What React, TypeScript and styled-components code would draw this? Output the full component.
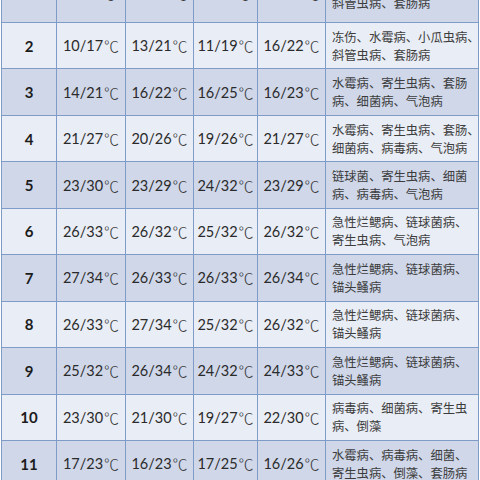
import React from "react";
import styled, { createGlobalStyle } from "styled-components";

const GlobalStyle = createGlobalStyle`
    html, body {
        margin: 0;
        padding: 0;
        background: #ffffff;
        overflow: hidden;
    }
`;

const Page = styled.div`
    width: 480px;
    height: 480px;
    overflow: hidden;
    background: #ffffff;
`;

// first row is only partly on screen, it sits above the visible area
const Table = styled.div`
    margin-top: -36px;
    margin-left: 1px;
    display: grid;
    grid-template-columns: 55px 69px 68px 64px 68px 153px;
    grid-template-rows: 58px;
    grid-auto-rows: 46.44px;
    border-top: 1px solid #7f9bc8;
    border-left: 1px solid #7f9bc8;
    width: 477px;
`;

const Cell = styled.div<{ $dark: boolean }>`
    box-sizing: border-box;
    border-right: 1px solid #7f9bc8;
    border-bottom: 1px solid #7f9bc8;
    background: ${(p) => (p.$dark ? "#cfd7e9" : "#e9edf5")};
    display: flex;
    align-items: center;
    justify-content: center;
    overflow: hidden;
`;

const NumCell = styled(Cell)`
    font-family: Lato, "Liberation Sans", sans-serif;
    font-weight: 700;
    font-size: 15px;
    color: #1c1c1c;
`;

const TempCell = styled(Cell)`
    font-family: Lato, "Noto Sans CJK SC", sans-serif;
    font-size: 14.5px;
    color: #2a2a2a;
`;

const Degree = styled.span`
    font-family: "Noto Sans CJK SC", sans-serif;
    font-weight: 300;
    font-size: 15px;
    color: #3a3a3a;
    margin-left: 1px;
`;

const DiseaseCell = styled(Cell)`
    justify-content: flex-start;
    padding-left: 6px;
    font-family: "Noto Sans CJK SC", sans-serif;
    font-weight: 400;
    font-size: 12.3px;
    line-height: 18px;
    color: #3c3c3c;
    white-space: nowrap;
`;

const Lines = styled.div`
    display: flex;
    flex-direction: column;
`;

interface IRow {
    no: string;
    temps: string[];
    lines: string[];
}

const rows: IRow[] = [
    { no: "1", temps: ["8/15", "10/17", "9/16", "12/18"], lines: ["冻伤、水霉病、小瓜虫病、", "斜管虫病、套肠病"] },
    { no: "2", temps: ["10/17", "13/21", "11/19", "16/22"], lines: ["冻伤、水霉病、小瓜虫病、", "斜管虫病、套肠病"] },
    { no: "3", temps: ["14/21", "16/22", "16/25", "16/23"], lines: ["水霉病、寄生虫病、套肠", "病、细菌病、气泡病"] },
    { no: "4", temps: ["21/27", "20/26", "19/26", "21/27"], lines: ["水霉病、寄生虫病、套肠、", "细菌病、病毒病、气泡病"] },
    { no: "5", temps: ["23/30", "23/29", "24/32", "23/29"], lines: ["链球菌、寄生虫病、细菌", "病、病毒病、气泡病"] },
    { no: "6", temps: ["26/33", "26/32", "25/32", "26/32"], lines: ["急性烂鳃病、链球菌病、", "寄生虫病、气泡病"] },
    { no: "7", temps: ["27/34", "26/33", "26/33", "26/34"], lines: ["急性烂鳃病、链球菌病、", "锚头鳋病"] },
    { no: "8", temps: ["26/33", "27/34", "25/32", "26/32"], lines: ["急性烂鳃病、链球菌病、", "锚头鳋病"] },
    { no: "9", temps: ["25/32", "26/34", "24/32", "24/33"], lines: ["急性烂鳃病、链球菌病、", "锚头鳋病"] },
    { no: "10", temps: ["23/30", "21/30", "19/27", "22/30"], lines: ["病毒病、细菌病、寄生虫", "病、倒藻"] },
    { no: "11", temps: ["17/23", "16/23", "17/25", "16/26"], lines: ["水霉病、病毒病、细菌、", "寄生虫病、倒藻、套肠病"] },
    { no: "12", temps: ["12/19", "11/18", "13/20", "12/19"], lines: ["水霉病、小瓜虫病、", "斜管虫病"] },
];

export default function App() {
    return (
        <Page>
            <GlobalStyle />
            <Table>
                {rows.map((row, i) => {
                    const dark = i % 2 === 0;
                    return (
                        <React.Fragment key={row.no}>
                            <NumCell $dark={dark}>{row.no}</NumCell>
                            {row.temps.map((t, j) => (
                                <TempCell $dark={dark} key={j}>
                                    {t}
                                    <Degree>℃</Degree>
                                </TempCell>
                            ))}
                            <DiseaseCell $dark={dark}>
                                <Lines>
                                    {row.lines.map((l, k) => (
                                        <span key={k}>{l}</span>
                                    ))}
                                </Lines>
                            </DiseaseCell>
                        </React.Fragment>
                    );
                })}
            </Table>
        </Page>
    );
}
